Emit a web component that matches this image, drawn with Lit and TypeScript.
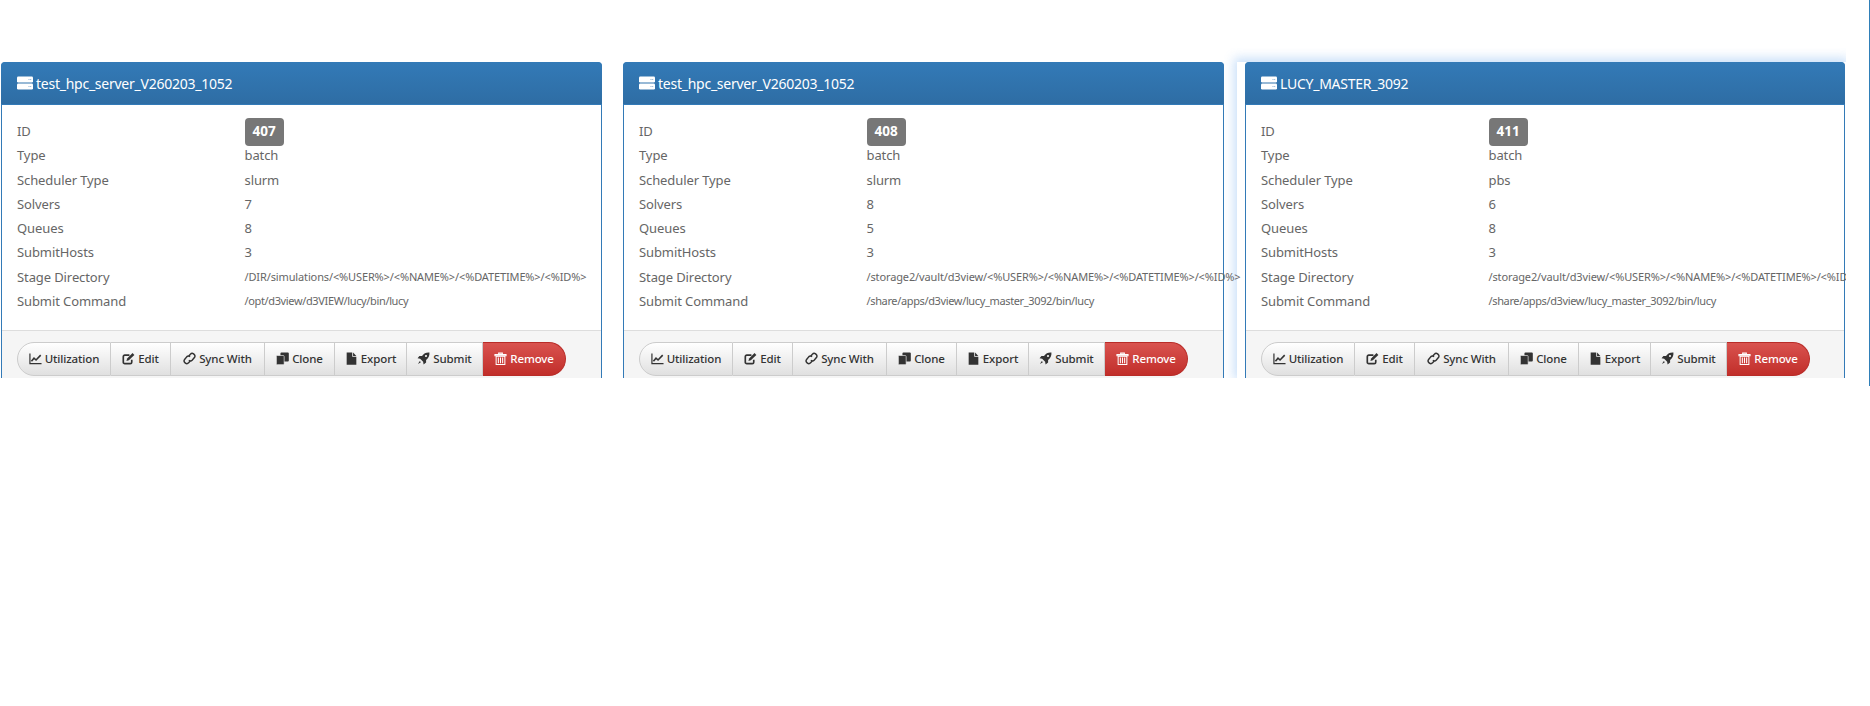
import { LitElement, html, css, svg } from "lit";
import { customElement } from "lit/decorators.js";

const icons: Record<string, any> = {
  chart: svg`<svg viewBox="0 0 14 14" class="ic"><path d="M1 1.500V12.500H13.500" fill="none" stroke="currentColor" stroke-width="1.300"/><path d="M2.600 10L5.400 6.600 7.600 8.600 12.600 3.400" fill="none" stroke="currentColor" stroke-width="1.700"/></svg>`,
  edit: svg`<svg viewBox="0 0 14 14" class="ic"><path d="M10.500 8.400V11a1.600 1.600 0 0 1-1.600 1.600H3A1.600 1.600 0 0 1 1.400 11V5A1.600 1.600 0 0 1 3 3.400h5" fill="none" stroke="currentColor" stroke-width="1.800"/><path d="M11.400 1.200l1.900 1.900-5.900 5.900-2.600.7.7-2.600z" fill="currentColor"/></svg>`,
  link: svg`<svg viewBox="0 0 14 14" class="ic"><g fill="none" stroke="currentColor" stroke-width="1.600"><path d="M6.300 4.400L8 2.300a2.500 2.500 0 0 1 3.400-.3l.6.6a2.400 2.400 0 0 1 .3 3.400L9.800 8.900a2.400 2.400 0 0 1-3.400 0"/><path d="M7.700 9.600L6 11.700a2.500 2.500 0 0 1-3.400.3l-.6-.6a2.400 2.400 0 0 1-.3-3.400l2.500-3a2.400 2.400 0 0 1 3.400 0"/></g></svg>`,
  clone: svg`<svg viewBox="0 0 14 14" class="ic"><rect x="4.800" y="0.600" width="9" height="9.600" rx="1" fill="currentColor"/><rect x="0.400" y="3.800" width="8.400" height="9.800" rx="1" fill="currentColor" stroke="#f0f0f0" stroke-width=".7"/></svg>`,
  file: svg`<svg viewBox="0 0 14 14" class="ic"><path d="M1.800 .6h6v4.600h4.400V13.600H1.800z" fill="currentColor"/><path d="M8.700 .6l3.500 3.700H8.700z" fill="currentColor"/></svg>`,
  rocket: svg`<svg viewBox="0 0 14 14" class="ic"><path d="M13.400.6c-3.400-.3-6 1-8 3.600H2.600L.6 6.800l2.800.5 3.200 3.200.5 2.900 2.700-2v-2.800c2.600-2 3.900-4.600 3.600-8zM9.700 5.500a1.200 1.200 0 1 1 0-2.400 1.200 1.200 0 0 1 0 2.400z" fill="currentColor" fill-rule="evenodd"/><path d="M3 9.800L1 13l3.200-2z" fill="currentColor"/></svg>`,
  trash: svg`<svg viewBox="0 0 14 14" class="ic tall"><path d="M1 2.800h12v1.300H1zM5 2.800V1.200h4v1.600" fill="none" stroke="currentColor" stroke-width="1.100"/><path d="M2.300 4.600h9.400V13.400H2.300zM4.700 5.800v6.200M7 5.800v6.200M9.300 5.800v6.200" fill="none" stroke="currentColor" stroke-width="1.100"/></svg>`,
};

const serverIcon = svg`<svg viewBox="0 0 16 14" class="srv"><rect x="0" y="0.500" width="16" height="6" rx="1.200" fill="#fff"/><rect x="0" y="7.500" width="16" height="6" rx="1.200" fill="#fff"/><g fill="#8fb3d4"><rect x="11.500" y="3" width="1" height="1"/><rect x="13.200" y="3" width="1" height="1"/><rect x="11.500" y="10" width="1" height="1"/><rect x="13.200" y="10" width="1" height="1"/></g></svg>`;

interface Server {
  name: string; id: number; sched: string; solvers: number; queues: number; hosts: number; stage: string; cmd: string;
}

const servers: Server[] = [
  { name: "test_hpc_server_V260203_1052", id: 407, sched: "slurm", solvers: 7, queues: 8, hosts: 3, stage: "/DIR/simulations/<%USER%>/<%NAME%>/<%DATETIME%>/<%ID%>", cmd: "/opt/d3view/d3VIEW/lucy/bin/lucy" },
  { name: "test_hpc_server_V260203_1052", id: 408, sched: "slurm", solvers: 8, queues: 5, hosts: 3, stage: "/storage2/vault/d3view/<%USER%>/<%NAME%>/<%DATETIME%>/<%ID%>", cmd: "/share/apps/d3view/lucy_master_3092/bin/lucy" },
  { name: "LUCY_MASTER_3092", id: 411, sched: "pbs", solvers: 6, queues: 8, hosts: 3, stage: "/storage2/vault/d3view/<%USER%>/<%NAME%>/<%DATETIME%>/<%ID%>", cmd: "/share/apps/d3view/lucy_master_3092/bin/lucy" },
];

const actions: [string, string, number][] = [
  ["chart", "Utilization", 94], ["edit", "Edit", 60], ["link", "Sync With", 94], ["clone", "Clone", 70], ["file", "Export", 72], ["rocket", "Submit", 76],
];

@customElement("app-root")
export class AppRoot extends LitElement {
  static styles = css`
    :host { display: block; font-family: "Noto Sans", "Open Sans", sans-serif; color: #666; }
    .page { height: 386px; box-sizing: border-box; padding-top: 62px; border-right: 1px solid #2f7fb8; }
    .row { display: flex; height: 316px; padding-left: 1px; clip-path: inset(-20px -100px 0 -100px); }
    .col { flex: 0 0 auto; width: 601px; margin-right: 21px; position: relative; }
    .col:nth-child(2) { z-index: 2; margin-right: 13px; }
    .col.glow { width: 609px; margin-right: 0; padding-left: 8px; box-sizing: border-box; overflow: hidden;
      background: #fff; box-shadow: 0 -1px 10px 3px rgba(90,160,235,.32); clip-path: inset(-14px 0 0 -14px); z-index: 1; }
    .card { box-sizing: border-box; width: 100%; height: 340px; border: 1px solid #337ab7; border-radius: 4px; background: #fff; }
    .col.glow .card { width: 600px; }
    .head { height: 43px; box-sizing: border-box; margin: -1px -1px 0; padding-left: 16px; display: flex; align-items: center; gap: 3px;
      background: linear-gradient(#337ab7, #2e6da4); border-radius: 4px 4px 0 0; border-bottom: 1px solid #337ab7;
      color: #fff; font-size: 14px; letter-spacing: -.25px; }
    .srv { width: 16px; height: 14px; flex: none; }
    .body { padding: 14px 15px 17px; display: grid; grid-template-columns: 227.500px 1fr; grid-auto-rows: 24.300px;
      font-size: 13px; line-height: 24.300px; letter-spacing: -.1px; white-space: nowrap; }
    .lbl, .val { color: #666; }
    .small { font-size: 11px; letter-spacing: -.13px; }
    .small.cmd { letter-spacing: -.36px; }
    .badge { display: inline-block; height: 28px; line-height: 27px; padding: 0 8px; margin-top: -1px; border-radius: 4px;
      background: #777; color: #fff; font-weight: 700; font-size: 13.500px; vertical-align: top; letter-spacing: 0; }
    .foot { height: 60px; box-sizing: border-box; padding: 11px 15px; background: #f5f5f5; border-top: 1px solid #ddd; }
    .btns { display: inline-flex; height: 34px; }
    .btn { display: flex; align-items: center; justify-content: center; gap: 3px; box-sizing: border-box; padding: 0 0 2px; height: 34px;
      border: 1px solid #ccc; border-left-width: 0; background: linear-gradient(#fff, #e0e0e0);
      color: #333; font-size: 11.500px; font-weight: 500; letter-spacing: -.12px; white-space: nowrap; }
    .btn:first-child { border-left-width: 1px; border-radius: 17px 0 0 17px; }
    .btn.danger { width: 83px; background: linear-gradient(#d9534f, #c12e2a); border-color: #b92c28; color: #fff; border-radius: 0 17px 17px 0; }
    .ic { width: 13px; height: 13px; flex: none; }
    .ic.tall { width: 13px; height: 15px; }
  `;

  card(s: Server, i: number) {
    const rows: [string, any][] = [
      ["Type", "batch"], ["Scheduler Type", s.sched], ["Solvers", s.solvers], ["Queues", s.queues], ["SubmitHosts", s.hosts],
    ];
    return html`<div class="col ${i === 2 ? "glow" : ""}">
      <div class="card">
        <div class="head">${serverIcon}<span>${s.name}</span></div>
        <div class="body">
          <div class="lbl">ID</div><div class="val"><span class="badge">${s.id}</span></div>
          ${rows.map(([l, v]) => html`<div class="lbl">${l}</div><div class="val">${v}</div>`)}
          <div class="lbl">Stage Directory</div><div class="val small">${s.stage}</div>
          <div class="lbl">Submit Command</div><div class="val small cmd">${s.cmd}</div>
        </div>
        <div class="foot"><div class="btns">
          ${actions.map(([ic, t, w]) => html`<div class="btn" style="width:${w}px">${icons[ic]}<span>${t}</span></div>`)}
          <div class="btn danger">${icons.trash}<span>Remove</span></div>
        </div></div>
      </div>
    </div>`;
  }

  render() {
    return html`<div class="page"><div class="row">${servers.map((s, i) => this.card(s, i))}</div></div>`;
  }
}
